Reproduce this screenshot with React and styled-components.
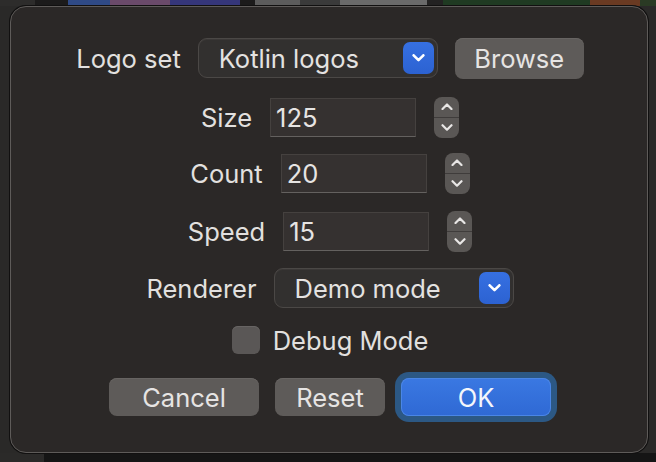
import React from "react";
import styled, { createGlobalStyle } from "styled-components";

const GlobalStyle = createGlobalStyle`
  html, body { margin: 0; padding: 0; background: #2a2928; overflow: hidden; }
  body { font-family: Inter, "Noto Sans", "Liberation Sans", sans-serif; }
  * { box-sizing: border-box; }
`;

const Page = styled.div`
  width: 656px;
  height: 462px;
  padding: 6px 8px 9px 10px;
  background:
    linear-gradient(to right,
      #2d2c2b 0 35px, #1c1b1b 35px 68px,
      #2f4a86 68px 110px, #6a4a6a 110px 170px, #35367a 170px 240px,
      #1c1b1b 240px 255px, #5c5c5c 255px 300px, #3a3a3a 300px 340px, #6a6a6a 340px 427px,
      #232222 427px 443px, #1f3a22 443px 590px, #6a3a22 590px 640px, #2a3a24 640px 656px)
      top / 100% 6px no-repeat,
    linear-gradient(to right, #2b2a29 0 44px, #151515 44px 656px)
      bottom / 100% 9px no-repeat,
    #2a2928;
`;

const Dialog = styled.div`
  width: 638px;
  height: 447px;
  background: #2b2827;
  border: 1px solid #5e5b59;
  border-radius: 16px;
  box-shadow: 0 0 0 1px #111010;
  display: flex;
  flex-direction: column;
  align-items: center;
  padding-top: 31px;
  color: #e2e0df;
  font-size: 25.5px;
`;

const Row = styled.div`
  display: flex;
  align-items: center;
  justify-content: center;
  height: ${(p) => p.$h || 40}px;
  margin-top: ${(p) => p.$mt || 0}px;
  gap: ${(p) => p.$gap || 18}px;
  padding-left: 2px;
`;

const Label = styled.span`
  color: #e2e0df;
  white-space: nowrap;
`;

const PopUp = styled.div`
  width: ${(p) => p.$w}px;
  height: 40px;
  border-radius: 9px;
  background: #32302f;
  border: 1px solid #4b4846;
  box-shadow: inset 0 1px 0 #3b3837;
  display: flex;
  align-items: center;
  justify-content: space-between;
  padding: 0 3px 0 20px;
`;

const PopUpText = styled.span`
  color: #e4e2e1;
  white-space: nowrap;
`;

const PopUpArrow = styled.span`
  width: 31px;
  height: 32px;
  border-radius: 7px;
  background: linear-gradient(#3670e2, #2c62d2);
  display: flex;
  align-items: center;
  justify-content: center;
`;

const PushButton = styled.div`
  width: ${(p) => p.$w}px;
  height: ${(p) => p.$h || 38}px;
  border-radius: 8px;
  background: ${(p) => (p.$primary ? "linear-gradient(#3a78e2, #2f69d4)" : "#5e5b59")};
  color: ${(p) => (p.$primary ? "#f4f6fb" : "#e6e4e3")};
  box-shadow: ${(p) =>
    p.$primary
      ? "inset 0 0 0 1px #4a86e6, 0 0 0 6px #2c5884"
      : "inset 0 1px 0 #676462"};
  display: flex;
  align-items: center;
  justify-content: center;
  white-space: nowrap;
`;

const TextField = styled.div`
  width: ${(p) => p.$w || 146}px;
  height: 39px;
  background: #353130;
  border: 1px solid #45413f;
  border-bottom-color: #64615f;
  display: flex;
  align-items: center;
  padding-left: 5px;
  color: #e6e4e3;
`;

const Stepper = styled.div`
  width: 25px;
  height: 41px;
  border-radius: 8px;
  background: #5a5755;
  display: flex;
  flex-direction: column;
  overflow: hidden;
`;

const StepHalf = styled.div`
  flex: 1;
  display: flex;
  align-items: center;
  justify-content: center;
  border-top: ${(p) => (p.$lower ? "1px solid #3f3c3b" : "none")};
`;

const Checkbox = styled.span`
  width: 28px;
  height: 28px;
  border-radius: 6px;
  background: #5a5756;
  box-shadow: inset 0 1px 0 #676463;
`;

const ButtonRow = styled(Row)`
  gap: 16px;
`;

const Chevron = ({ up, size = 12, color = "#ffffff", sw = 2.4 }) => (
  <svg width={size} height={size * 0.6} viewBox="0 0 12 7.2" fill="none">
    <path
      d={up ? "M1.5 6 L6 1.5 L10.5 6" : "M1.5 1.2 L6 5.7 L10.5 1.2"}
      stroke={color}
      strokeWidth={sw}
      strokeLinecap="round"
      strokeLinejoin="round"
    />
  </svg>
);

const NumberStepper = () => (
  <Stepper>
    <StepHalf>
      <Chevron up size={12} color="#e8e6e5" sw={2.2} />
    </StepHalf>
    <StepHalf $lower>
      <Chevron size={12} color="#e8e6e5" sw={2.2} />
    </StepHalf>
  </Stepper>
);

const PopUpButton = ({ w, children }) => (
  <PopUp $w={w}>
    <PopUpText>{children}</PopUpText>
    <PopUpArrow>
      <Chevron size={13} />
    </PopUpArrow>
  </PopUp>
);

const NumberRow = ({ label, value, mt }) => (
  <Row $mt={mt} $gap={18}>
    <Label>{label}</Label>
    <TextField>{value}</TextField>
    <NumberStepper />
  </Row>
);

export default function App() {
  return (
    <>
      <GlobalStyle />
      <Page>
        <Dialog>
          <Row $gap={17}>
            <Label>Logo set</Label>
            <PopUpButton w={240}>Kotlin logos</PopUpButton>
            <PushButton $w={129} $h={41}>Browse</PushButton>
          </Row>
          <NumberRow label="Size" value="125" mt={19} />
          <NumberRow label="Count" value="20" mt={16} />
          <NumberRow label="Speed" value="15" mt={18} />
          <Row $mt={17} $gap={17}>
            <Label>Renderer</Label>
            <PopUpButton w={240}>Demo mode</PopUpButton>
          </Row>
          <Row $mt={18} $h={28} $gap={13}>
            <Checkbox />
            <Label>Debug Mode</Label>
          </Row>
          <ButtonRow $mt={23}>
            <PushButton $w={150}>Cancel</PushButton>
            <PushButton $w={110}>Reset</PushButton>
            <PushButton $w={150} $primary>OK</PushButton>
          </ButtonRow>
        </Dialog>
      </Page>
    </>
  );
}
